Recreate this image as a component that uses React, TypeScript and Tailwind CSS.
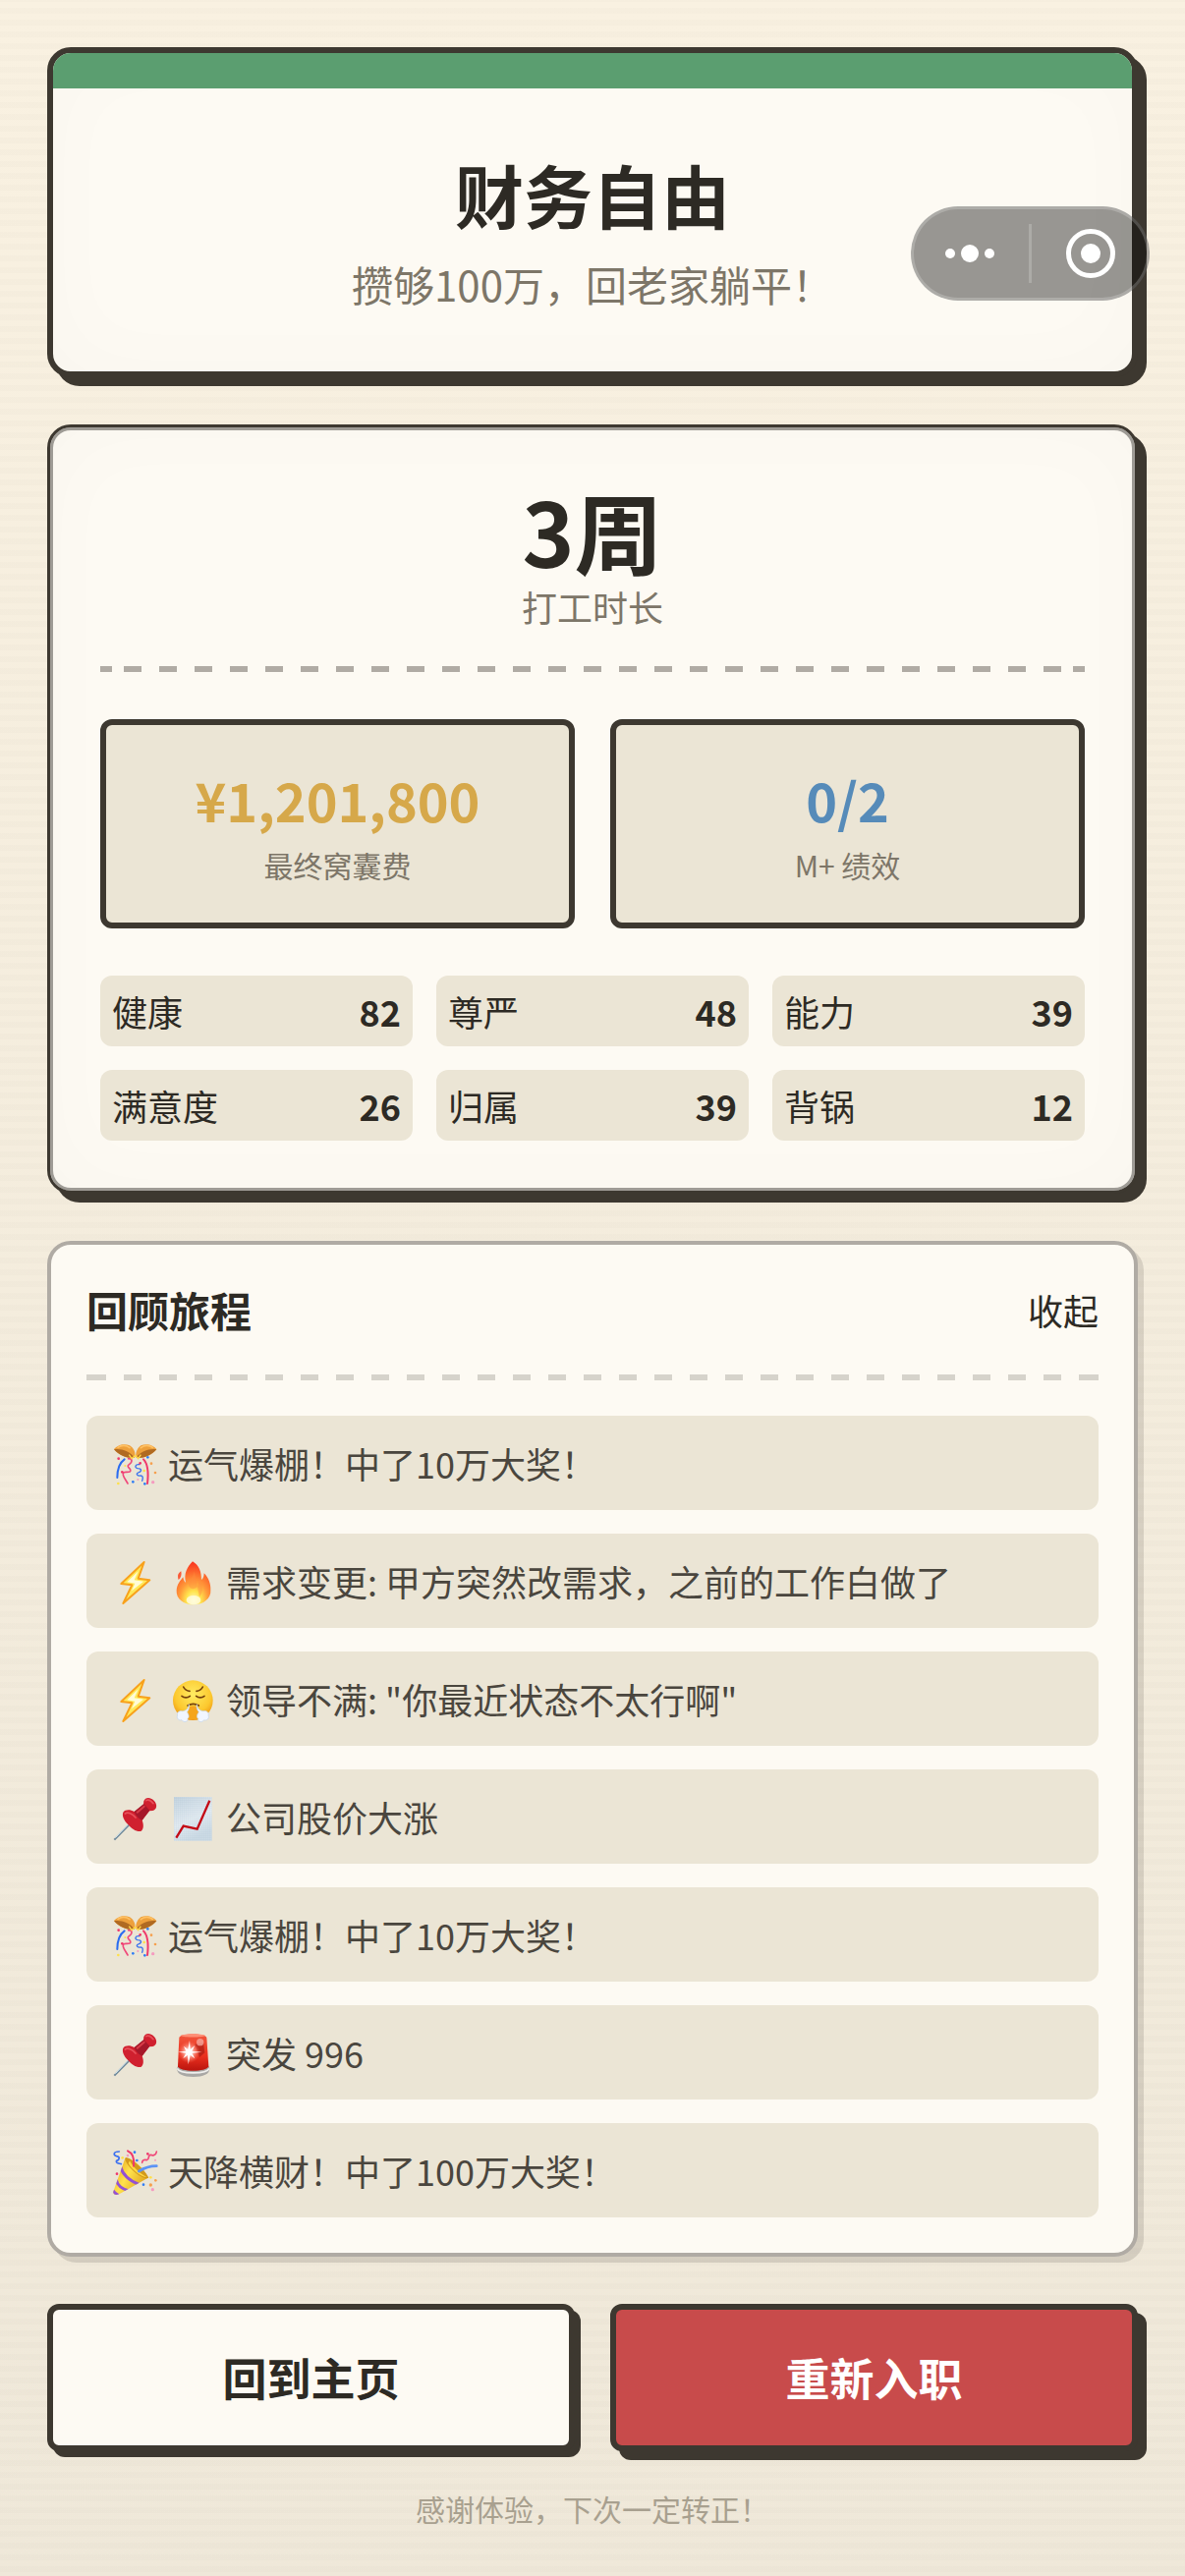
import { useState, type ReactNode } from "react";

type IconName = "ball" | "bolt" | "fire" | "huff" | "pin" | "chart" | "siren" | "popper";

const goals = [
  { value: "¥1,201,800", label: "最终窝囊费", color: "text-[#d6a84a]" },
  { value: "0/2", label: "M+ 绩效", color: "text-[#568bb9]" },
];

const stats = [
  { name: "健康", value: 82 },
  { name: "尊严", value: 48 },
  { name: "能力", value: 39 },
  { name: "满意度", value: 26 },
  { name: "归属", value: 39 },
  { name: "背锅", value: 12 },
];

const events: { icons: IconName[]; text: string }[] = [
  { icons: ["ball"], text: "运气爆棚！中了10万大奖！" },
  { icons: ["bolt", "fire"], text: "需求变更: 甲方突然改需求，之前的工作白做了" },
  { icons: ["bolt", "huff"], text: '领导不满: "你最近状态不太行啊"' },
  { icons: ["pin", "chart"], text: "公司股价大涨" },
  { icons: ["ball"], text: "运气爆棚！中了10万大奖！" },
  { icons: ["pin", "siren"], text: "突发 996" },
  { icons: ["popper"], text: "天降横财！中了100万大奖！" },
];

const drawings: Record<IconName, ReactNode> = {
  ball: (
    <>
      <g fill="none" strokeLinecap="round">
        <path d="M44 64C30 74 22 96 22 120" stroke="#2a6cf0" strokeWidth="6" />
        <path d="M56 62C70 62 68 74 58 80C46 88 70 94 60 102C50 106 38 98 40 112C42 120 46 124 54 138" stroke="#f0487a" strokeWidth="5" />
        <path d="M102 64C116 78 118 104 114 138" stroke="#f0386b" strokeWidth="6" />
        <path d="M90 80C76 78 74 90 84 92C96 92 98 100 88 104C76 108 84 116 94 114C102 114 100 124 98 130" stroke="#3a72ee" strokeWidth="4" />
      </g>
      <path d="M12 34C20 20 44 14 60 22C74 30 80 48 74 60C52 62 28 52 12 34Z" fill="#eda03c" />
      <path d="M12 34C30 30 62 38 74 60C52 62 28 52 12 34Z" fill="#b06a22" />
      <path d="M24 28C34 20 50 20 60 29" fill="none" stroke="#ffc164" strokeWidth="5" strokeLinecap="round" />
      <path d="M142 34C134 20 110 14 94 22C82 30 76 48 80 60C102 62 126 52 142 34Z" fill="#eda03c" />
      <path d="M142 34C124 30 92 38 80 60C102 62 126 52 142 34Z" fill="#b06a22" />
      <path d="M130 28C120 20 104 20 94 29" fill="none" stroke="#ffc164" strokeWidth="5" strokeLinecap="round" />
      <path d="M58 50L66 62L77 52L86 62L94 50" fill="none" stroke="#ffd84a" strokeWidth="4" />
      <g fill="#f0386b">
        <circle cx="26" cy="62" r="4" />
        <circle cx="37" cy="103" r="4" />
        <circle cx="92" cy="76" r="4" />
      </g>
      <g fill="#f59bc0">
        <circle cx="131" cy="134" r="5" />
        <circle cx="85" cy="126" r="3" />
      </g>
      <g fill="#ffe14b">
        <circle cx="25" cy="138" r="4" />
        <circle cx="104" cy="99" r="4" />
        <circle cx="46" cy="84" r="3" />
      </g>
      <g fill="#2f7df5">
        <circle cx="70" cy="133" r="4" />
        <circle cx="106" cy="139" r="4" />
        <circle cx="115" cy="58" r="4" />
      </g>
      <g fill="#f6a04d">
        <circle cx="126" cy="77" r="4" />
        <circle cx="138" cy="105" r="4" />
      </g>
    </>
  ),
  bolt: (
    <>
      <path d="M104 18L34 84L67 88L40 144L121 73L86 68Z" fill="#ffe95a" stroke="#f8a11c" strokeWidth="6" strokeLinejoin="round" />
      <path d="M86 46L52 79L76 83L66 106L102 77L74 73Z" fill="#fffcd8" />
    </>
  ),
  fire: (
    <>
      <defs>
        <radialGradient id="flame" cx="0.5" cy="0.9" r="0.85">
          <stop offset="0" stopColor="#fffbc4" />
          <stop offset="0.25" stopColor="#ffe44d" />
          <stop offset="0.5" stopColor="#ff9b3a" />
          <stop offset="1" stopColor="#fa3b20" />
        </radialGradient>
      </defs>
      <path d="M75 16C96 28 102 50 102 72C108 68 110 60 110 52C124 66 131 84 130 104C132 128 108 148 78 148C48 148 24 130 26 104C27 86 38 74 46 64C48 74 50 78 54 80C48 52 58 34 75 16Z" fill="url(#flame)" />
      <path d="M40 46C30 52 28 60 32 72C40 66 42 58 40 46Z" fill="#fa5a38" />
      <path d="M77 30C86 50 74 62 66 78C60 90 66 98 76 100C96 96 96 78 90 62C106 84 110 108 96 124" fill="#ff8b3d" opacity="0.45" />
      <ellipse cx="78" cy="134" rx="22" ry="14" fill="#fffde0" opacity="0.8" />
    </>
  ),
  huff: (
    <>
      <defs>
        <radialGradient id="face" cx="0.5" cy="0.35" r="0.65">
          <stop offset="0" stopColor="#ffec62" />
          <stop offset="0.7" stopColor="#fcc82e" />
          <stop offset="1" stopColor="#ee9614" />
        </radialGradient>
      </defs>
      <circle cx="76" cy="80" r="61" fill="url(#face)" />
      <g fill="none" stroke="#75420c" strokeWidth="5" strokeLinecap="round">
        <path d="M47 39C50 46 58 51 66 52" />
        <path d="M106 39C103 46 95 51 87 52" />
        <path d="M42 67C49 73 60 73 67 67" />
        <path d="M86 67C93 73 104 73 111 67" />
        <path d="M60 96C70 90 84 90 94 96" />
      </g>
      <path d="M62 102C68 96 86 96 92 102L94 138H60Z" fill="#f5a51c" />
      <g fill="#f1f6ff" stroke="#c3d3ea" strokeWidth="2">
        <path d="M64 92C62 108 52 112 44 113C34 110 26 118 29 126C24 134 34 144 42 140C48 150 62 146 60 136C68 130 60 118 58 116C64 108 66 100 64 92Z" />
        <path d="M88 92C90 108 100 112 108 113C118 110 126 118 123 126C128 134 118 144 110 140C104 150 90 146 92 136C84 130 92 118 94 116C88 108 86 100 88 92Z" />
      </g>
    </>
  ),
  pin: (
    <>
      <path d="M64 94L13 146" stroke="#6f8899" strokeWidth="6" />
      <path d="M62 92L16 140" stroke="#cfe3ee" strokeWidth="3" />
      <path d="M103 28C107 16 122 14 134 26C146 38 143 54 130 57L120 58L98 86C104 102 102 114 94 120C80 122 66 112 54 98C42 86 36 72 40 62C46 54 60 52 74 60L102 38Z" fill="#d0202f" />
      <path d="M74 60L103 36L121 56L98 86C90 84 78 72 74 60Z" fill="#a5182a" />
      <path d="M46 66C54 60 68 66 78 78" fill="none" stroke="#e8505a" strokeWidth="5" strokeLinecap="round" />
      <path d="M110 26C116 22 124 25 132 35" fill="none" stroke="#e8505a" strokeWidth="5" strokeLinecap="round" />
      <path d="M83 62L104 44" stroke="#d83c48" strokeWidth="6" strokeLinecap="round" />
    </>
  ),
  chart: (
    <>
      <defs>
        <linearGradient id="paper" x1="0" y1="0" x2="0.4" y2="1">
          <stop offset="0" stopColor="#c4d4df" />
          <stop offset="0.6" stopColor="#e4ecf2" />
          <stop offset="1" stopColor="#ccdbe5" />
        </linearGradient>
        <pattern id="grid" width="6" height="6" patternUnits="userSpaceOnUse">
          <path d="M6 0H0V6" fill="none" stroke="#9fb9ca" strokeWidth="1.5" />
        </pattern>
      </defs>
      <path d="M18 15H134V149H18Z" fill="url(#paper)" />
      <path d="M18 15H134V149H18Z" fill="url(#grid)" opacity="0.4" />
      <path d="M25 140L47 104L89 113L127 26" fill="none" stroke="#c40a16" strokeWidth="7" />
    </>
  ),
  siren: (
    <>
      <defs>
        <linearGradient id="dome" x1="0" y1="0" x2="0" y2="1">
          <stop offset="0" stopColor="#f2573d" />
          <stop offset="0.6" stopColor="#e9301f" />
          <stop offset="1" stopColor="#b9140e" />
        </linearGradient>
        <radialGradient id="glow">
          <stop offset="0" stopColor="#ffffff" />
          <stop offset="0.4" stopColor="#ffc2b6" stopOpacity="0.8" />
          <stop offset="1" stopColor="#ff7058" stopOpacity="0" />
        </radialGradient>
      </defs>
      <path d="M27 124C27 142 46 150 77 150C108 150 127 142 127 124L122 114H32Z" fill="#a9a8a5" />
      <path d="M28 124C36 142 118 142 126 124" fill="none" stroke="#efefed" strokeWidth="5" />
      <path d="M34 30C36 16 116 16 118 30L124 118C118 136 36 136 30 118Z" fill="url(#dome)" />
      <path d="M38 24C50 17 104 17 114 24C104 30 50 30 38 24Z" fill="#ff8e75" />
      <path d="M82 50L108 46L112 76L96 90Z" fill="#9c1710" opacity="0.6" />
      <circle cx="98" cy="44" r="11" fill="#f5a79d" opacity="0.8" />
      <circle cx="64" cy="74" r="34" fill="url(#glow)" />
      <path d="M66 38L68 66L82 54L73 72L104 74L73 77L82 94L68 83L62 112L60 83L46 94L55 77L30 74L55 71L48 56L61 66Z" fill="#fff" />
    </>
  ),
  popper: (
    <>
      <defs>
        <linearGradient id="cone" x1="0" y1="0" x2="1" y2="0.6">
          <stop offset="0" stopColor="#e39b12" />
          <stop offset="0.5" stopColor="#ffe24d" />
          <stop offset="1" stopColor="#e0a21a" />
        </linearGradient>
        <clipPath id="coneEdge">
          <path d="M46 38L10 140C8 150 18 152 28 148L116 98C104 70 72 38 46 38Z" />
        </clipPath>
      </defs>
      <path d="M46 38L10 140C8 150 18 152 28 148L116 98C104 70 72 38 46 38Z" fill="url(#cone)" />
      <g clipPath="url(#coneEdge)" fill="none" stroke="#9351d4" strokeWidth="9">
        <path d="M32 64C38 88 58 106 88 118" />
        <path d="M18 102C22 120 34 132 58 138" />
        <path d="M8 136C12 142 18 148 26 152" />
      </g>
      <path d="M48 36C68 38 110 78 118 98C108 104 82 90 66 72C52 58 42 40 48 36Z" fill="#d39a1c" />
      <path d="M60 46C70 66 92 86 112 96C96 96 66 74 56 54Z" fill="#ffd842" />
      <g fill="none" strokeLinecap="round">
        <path d="M28 18C8 18 10 30 20 32C32 34 28 44 20 46C16 52 26 54 34 56" stroke="#3a6ff0" strokeWidth="5" />
        <path d="M54 16C74 24 74 44 72 62" stroke="#f0386b" strokeWidth="6" />
        <path d="M142 18C140 32 128 30 124 28C114 28 122 42 112 44C104 42 98 44 98 52" stroke="#f0487a" strokeWidth="5" />
        <path d="M88 78C104 68 122 62 142 62" stroke="#5b93f5" strokeWidth="8" />
      </g>
      <g fill="#f6a04d">
        <circle cx="139" cy="106" r="4" />
        <circle cx="124" cy="120" r="5" />
      </g>
      <g fill="#f59bc0">
        <circle cx="130" cy="134" r="5" />
        <circle cx="54" cy="30" r="4" />
        <circle cx="138" cy="44" r="3" />
      </g>
      <g fill="#2f7df5">
        <circle cx="102" cy="119" r="4" />
        <circle cx="75" cy="20" r="4" />
        <circle cx="82" cy="45" r="4" />
      </g>
      <g fill="#f0386b">
        <circle cx="21" cy="86" r="4" />
        <circle cx="115" cy="25" r="4" />
      </g>
      <g fill="#ffe14b">
        <circle cx="38" cy="37" r="4" />
        <circle cx="124" cy="97" r="4" />
      </g>
    </>
  ),
};

function EventIcon({ name }: { name: IconName }) {
  return (
    <svg viewBox="0 0 150 150" className="size-[50px] shrink-0" aria-hidden="true">
      {drawings[name]}
    </svg>
  );
}

function StrongDivider() {
  return (
    <div className="flex h-[6px] gap-3">
      <span className="w-3 bg-[#b0aba4]" />
      <span className="flex-1 bg-[repeating-linear-gradient(90deg,#b0aba4_0_18px,transparent_18px_36px)]" />
      <span className="w-3 bg-[#b0aba4]" />
    </div>
  );
}

function SoftDivider() {
  return (
    <div className="flex h-[6px] gap-[18px]">
      <span className="w-5 bg-[#d6d3cb]" />
      <span className="flex-1 bg-[repeating-linear-gradient(90deg,#d6d3cb_0_18px,transparent_18px_36px)]" />
      <span className="w-5 bg-[#d6d3cb]" />
    </div>
  );
}

function Capsule() {
  return (
    <div className="absolute top-[210px] right-9 flex h-24 w-[243px] items-center justify-between rounded-full border-[3px] border-white/20 bg-black/40">
      <button type="button" aria-label="更多" className="flex h-full w-[114px] items-center justify-center">
        <svg viewBox="0 0 52 20" className="h-5 w-[52px]" fill="#fff">
          <circle cx="6" cy="10" r="5" />
          <circle cx="26" cy="10" r="9" />
          <circle cx="46" cy="10" r="5" />
        </svg>
      </button>
      <span className="h-[60px] w-[3px] bg-white/20" />
      <button type="button" aria-label="关闭" className="flex h-full w-[114px] items-center justify-center">
        <svg viewBox="0 0 50 50" className="size-[50px]">
          <circle cx="25" cy="25" r="22.5" fill="none" stroke="#fff" strokeWidth="5" />
          <circle cx="25" cy="25" r="10" fill="#fff" />
        </svg>
      </button>
    </div>
  );
}

export default function App() {
  const [open, setOpen] = useState(true);

  return (
    <div className="relative min-h-screen bg-[repeating-linear-gradient(180deg,rgba(61,56,48,0.016)_0_2px,transparent_2px_8px,rgba(61,56,48,0.016)_8px_12px),linear-gradient(180deg,#f9f1e1,#efe8d9)] font-['Noto_Sans_CJK_SC',sans-serif] text-[#2d2a24]">
      <main className="flex flex-col gap-12 px-12 pt-12 pb-11">
        <header className="overflow-hidden rounded-3xl border-[6px] border-[#3d3830] bg-[#fdfaf3] text-center shadow-[9px_9px_0_#3d3830,inset_0_0_90px_rgba(61,56,48,0.02)]">
          <div className="h-9 bg-[#5b9e70]" />
          <div className="px-12 pt-16 pb-[56px]">
            <h1 className="text-[70px] leading-[88px] font-bold">财务自由</h1>
            <p className="mt-3.5 text-[42px] leading-[66px] text-[#7d7668]">攒够100万，回老家躺平！</p>
          </div>
        </header>

        <section className="rounded-3xl border-[3px] border-[#3d3830] bg-[#fdfaf3] p-[51px] shadow-[9px_9px_0_#3d3830,inset_0_0_0_3px_#9e9b95,inset_0_0_90px_rgba(61,56,48,0.02)]">
          <div className="mb-9 text-center">
            <p className="text-[90px] leading-[106px] font-bold">3周</p>
            <p className="text-[36px] leading-[50px] text-[#7d7668]">打工时长</p>
          </div>
          <StrongDivider />
          <div className="mt-12 grid grid-cols-2 gap-9">
            {goals.map((g) => (
              <div key={g.label} className="rounded-xl border-[6px] border-[#3d3830] bg-[#ebe5d5] py-9 text-center">
                <p className={`text-[54px] leading-20 font-bold ${g.color}`}>{g.value}</p>
                <p className="mt-1 text-[30px] leading-[45px] text-[#7d7668]">{g.label}</p>
              </div>
            ))}
          </div>
          <dl className="mt-12 grid grid-cols-3 gap-6">
            {stats.map((s) => (
              <div key={s.name} className="flex h-18 items-center justify-between rounded-xl bg-[#ebe5d5] px-3 text-[36px] leading-[54px]">
                <dt>{s.name}</dt>
                <dd className="font-bold">{s.value}</dd>
              </div>
            ))}
          </dl>
        </section>

        <section className="rounded-3xl border-[4px] border-[#b0aba4] bg-[#fdfaf3] p-9 shadow-[6px_6px_0_rgba(61,56,48,0.15)]">
          <div className="mb-9 flex items-center justify-between">
            <h2 className="text-[42px] leading-[60px] font-bold">回顾旅程</h2>
            <button type="button" aria-expanded={open} onClick={() => setOpen(!open)} className="text-[36px] leading-[54px]">
              {open ? "收起" : "展开"}
            </button>
          </div>
          <SoftDivider />
          {open && (
            <ul className="mt-9 flex flex-col gap-6">
              {events.map((e, i) => (
                <li key={i} className="flex h-24 items-center gap-[9px] rounded-xl bg-[#ebe5d5] px-6 text-[36px] leading-[54px] text-[#4a463e]">
                  {e.icons.map((name) => (
                    <EventIcon key={name} name={name} />
                  ))}
                  <span>{e.text}</span>
                </li>
              ))}
            </ul>
          )}
        </section>

        <div className="grid grid-cols-2 gap-9">
          <button type="button" className="h-[150px] rounded-xl border-[6px] border-[#3d3830] bg-[#fdfaf3] text-[45px] font-bold shadow-[6px_6px_0_#3d3830]">
            回到主页
          </button>
          <button type="button" className="h-[150px] rounded-xl border-[6px] border-[#3d3830] bg-[#c84b4b] text-[45px] font-bold text-white shadow-[9px_9px_0_#3d3830]">
            重新入职
          </button>
        </div>

        <p className="-mt-3 text-center text-[30px] leading-[45px] text-[#a8a08f]">感谢体验，下次一定转正！</p>
      </main>
      <Capsule />
    </div>
  );
}
